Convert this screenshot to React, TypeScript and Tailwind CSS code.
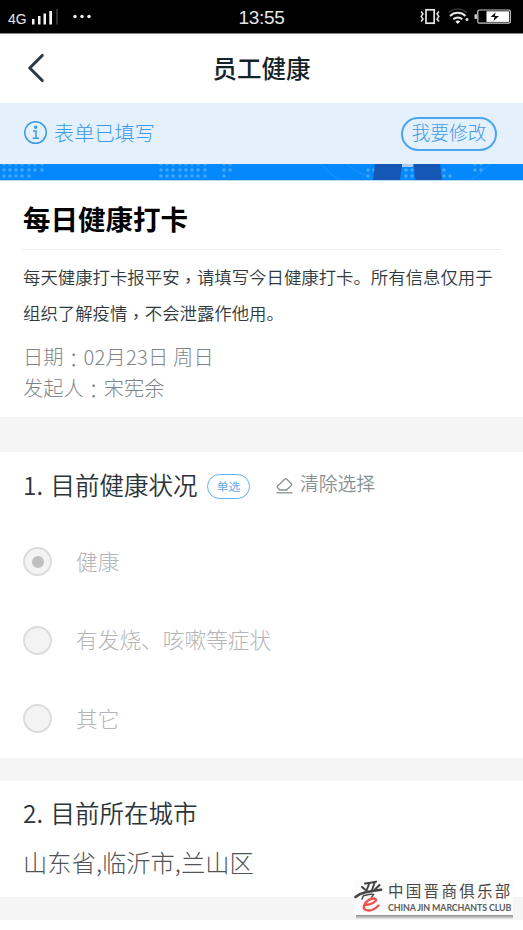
import { ChevronLeft } from "lucide-react"
import clsx from "clsx"

const options = [
  { label: "健康", checked: true },
  { label: "有发烧、咳嗽等症状", checked: false },
  { label: "其它", checked: false },
]

// dot columns of the banner map, one list per row
const bannerDots = [
  { y: 0, xs: [4, 10, 16, 22, 29, 35, 42, 161, 167, 173, 180, 186, 192, 198, 205, 224, 230, 406, 412, 475, 481] },
  { y: 6, xs: [4, 10, 16, 22, 29, 35, 42, 161, 167, 173, 180, 186, 192, 198, 205, 224, 230, 368, 374, 406, 412, 444, 475, 481] },
  { y: 12, xs: [4, 10, 16, 22, 29, 161, 167, 173, 180, 186, 192, 198, 205, 224, 368, 406, 412, 444, 450] },
]

// full-width punctuation centred in its cell
function Mid({ children }: { children: string }) {
  return <span className="relative top-[3px] font-['Noto_Sans_CJK_TC']">{children}</span>
}

function StatusBar() {
  return (
    <div className="flex h-[33px] items-center bg-black text-white">
      <svg className="h-[33px] w-[200px] shrink-0" viewBox="0 0 200 33">
        <text x="8" y="24" fontSize="15.5" fill="#e8e8e8" fontFamily="Liberation Sans, sans-serif" textLength="18.5" lengthAdjust="spacingAndGlyphs">4G</text>
        <g fill="#f2f2f2">
          <rect x="32" y="19" width="2.5" height="5.5" />
          <rect x="38" y="16" width="2.5" height="8.5" />
          <rect x="43.5" y="13.5" width="2.5" height="11" />
          <rect x="49.3" y="11" width="2.7" height="13.5" />
          <rect x="56" y="9" width="1.8" height="15.5" fill="#333" />
          <circle cx="75" cy="16.5" r="1.7" />
          <circle cx="82" cy="16.5" r="1.7" />
          <circle cx="89" cy="16.5" r="1.7" />
        </g>
      </svg>
      <div className="w-[123px] pt-[3px] text-center font-['Liberation_Sans'] text-[19px] tracking-[-0.3px] text-[#e6e6e6]">13:55</div>
      <svg className="h-[33px] w-[200px] shrink-0" viewBox="323 0 200 33">
        <g fill="none" stroke="#e6e6e6" strokeWidth="1.5">
          <rect x="426" y="9.8" width="8.2" height="13.4" strokeWidth="1.7" />
          <path d="M421 11.500l2 2.300-1.800 2.600 1.800 2.700-2 2.400M439 11.500l-2 2.300 1.800 2.600-1.800 2.700 2 2.400" />
          <path d="M448.500 12.500a13 13 0 0 1 18 0" stroke="#333" />
          <path d="M450 16a11 11 0 0 1 15.500 0" strokeWidth="2" />
          <path d="M453.300 19.300a6.500 6.500 0 0 1 9 0" strokeWidth="2" />
          <rect x="477.800" y="10" width="32.500" height="13.200" rx="1.500" stroke="#ccc" strokeWidth="1.200" />
        </g>
        <path d="M455.500 21.500a3 3 0 0 1 4.600 0l-2.300 2.500z" fill="#fff" />
        <circle cx="467" cy="19.500" r="1.500" fill="#ddd" />
        <rect x="474.500" y="14.300" width="2.500" height="4.600" rx="1" fill="#ccc" />
        <rect x="486.500" y="11.300" width="22.500" height="10.600" fill="#fff" />
        <path d="M495.500 12.500l-5 4.500h4l-1 4 5.500-5h-4z" fill="#111" />
      </svg>
    </div>
  )
}

function Banner() {
  return (
    <svg className="block h-[17px] w-full" viewBox="0 0 523 17">
      <rect width="523" height="17" fill="#0588fb" />
      <path d="M321 0q8 9 20 17M346 0q12 9 24 14M490 0q-10 10-20 17" fill="none" stroke="#2494f8" strokeWidth="1" />
      <g fill="#43a8f8">
        {bannerDots.map((row) => row.xs.map((x) => <circle key={`${x}-${row.y}`} cx={x} cy={row.y} r="1.8" />))}
      </g>
      <path d="M375 0h27l-2 16h-27zM414 0h26l2 16h-27z" fill="#1656b5" />
      <rect x="402" y="0" width="11" height="3" fill="#a9cdf2" />
      <rect y="16" width="523" height="1" fill="#b5dafa" />
    </svg>
  )
}

function QuestionTitle({ index, title }: { index: number; title: string }) {
  return (
    <h2 className="flex text-[24.5px] leading-9 font-[350] whitespace-nowrap text-[#2b3438]">
      <span className="w-[27.5px]">{index}.</span>
      {title}
    </h2>
  )
}

function Radio({ checked }: { checked: boolean }) {
  return (
    <span className="flex size-[29px] items-center justify-center rounded-full border-2 border-[#dcdcdc] bg-[#f3f3f3]">
      <span className={clsx("size-3 rounded-full", checked && "bg-[#bfbfbf]")} />
    </span>
  )
}

function ClubMark() {
  return (
    <div className="absolute top-[880px] left-[354px] h-[39px] w-[159px]">
      <div className="flex h-[35px] bg-[#fcfcfc]">
        <svg className="h-[35px] w-[34px] shrink-0" viewBox="0 0 34 35" fill="none" strokeLinecap="round">
          <g stroke="#454545">
            <path d="M11 3.500q6-.5 11-1.800" strokeWidth="2.200" />
            <path d="M15 4l-3 8M20.500 3l-3 8.500" strokeWidth="2" />
            <path d="M8 7l3 2.500M25.500 5l-4.500 4.500" strokeWidth="2.200" />
            <path d="M1.500 17q4-3.500 10-4.700t15.500-2.500" strokeWidth="2.600" />
            <path d="M9.500 15.500l-1.500 3.500M10.500 15.500q7-2 9-1-.5 1.500-2 2.500" strokeWidth="1.500" />
          </g>
          <path d="M11 25q7-.5 10.500-4c2-3-3.500-3.500-7.500-.5s-6 8-2 9.500 9-1 12.500-4.500" stroke="#ef5350" strokeWidth="2.400" />
        </svg>
        <div className="whitespace-nowrap">
          <div className="h-5 text-[15.5px] leading-5 tracking-[2.3px] text-[#484848]">中国晋商俱乐部</div>
          <div className="h-[15px] font-['Lato'] text-[8.9px] leading-[15px] font-bold tracking-[-0.13px] text-[#5c5c5c]">CHINA JIN MARCHANTS CLUB</div>
        </div>
      </div>
      <div className="ml-0.5 h-1 bg-gradient-to-b from-[#8a8a8a] to-[#ededed]" />
    </div>
  )
}

export default function App() {
  return (
    <div className="relative h-[930px] w-[523px] bg-white font-['Noto_Sans_CJK_SC',sans-serif]">
      <StatusBar />
      <header className="grid h-[70px] grid-cols-[80px_1fr_80px] items-center border-t border-[#8a8a8a]">
        <ChevronLeft className="mb-0.5 ml-[11px] size-[50px] text-[#2f3b43]" strokeWidth={1.5} />
        <h1 className="pb-0.5 text-center text-[24.5px] leading-9 font-medium text-[#142329]">员工健康</h1>
      </header>

      <div className="flex h-[61px] items-center justify-between bg-[#e4f0fb] pr-[26px] pl-6 text-[#3c9be9]">
        <div className="flex items-center gap-1.5 pb-0.5">
          <svg className="size-6" viewBox="0 0 24 24" fill="none" stroke="currentColor" strokeWidth="1.500">
            <circle cx="11.500" cy="11.500" r="10.800" />
            <path d="M9 10h3v7M8.700 17.200h6.300" />
            <circle cx="11.700" cy="6.300" r="1" fill="currentColor" />
          </svg>
          <span className="text-[20.2px] leading-8 font-light">表单已填写</span>
        </div>
        <button className="flex h-[34px] w-24 items-center justify-center rounded-full border-2 border-[#4ba5f2] pb-[3px] text-[18.8px] font-light whitespace-nowrap">
          我要修改
        </button>
      </div>

      <Banner />

      <section className="h-[236px] pl-[23px]">
        <h2 className="flex h-[69px] w-[478px] items-center border-b border-[#ebebeb] pt-2 text-[27.5px] font-bold text-black">每日健康打卡</h2>
        <p className="pt-[9px] text-[17.4px] leading-9 font-[350] whitespace-nowrap text-[#303a3e]">
          每天健康打卡报平安<Mid>，</Mid>请填写今日健康打卡。所有信息仅用于
          <br />
          组织了解疫情<Mid>，</Mid>不会泄露作他用。
        </p>
        <div className="pt-[11px] text-[20.2px] leading-[30.5px] font-light whitespace-nowrap text-[#7f8689]">
          <p>日期<Mid>：</Mid><span className="tracking-[0.2px]">02月23日 周日</span></p>
          <p>发起人<Mid>：</Mid>宋宪余</p>
        </div>
      </section>

      <section className="h-[341px] border-t-[35px] border-[#f5f5f5] pl-[23px]">
        <div className="flex items-center pt-[15px]">
          <QuestionTitle index={1} title="目前健康状况" />
          <span className="mt-[2px] ml-[9.5px] flex h-[25px] w-[43px] items-center justify-center rounded-full border-[1.5px] border-[#63b1f4] text-[11.7px] text-[#63acea]">
            单选
          </span>
          <div className="mb-1 ml-[26px] flex items-center gap-[7px] text-[#899093]">
            <svg className="mt-1 size-[17px]" viewBox="0 0 17 17" fill="none" stroke="currentColor" strokeWidth="1.300">
              <path d="M3.800 13l-2.300-2.500q-.6-.8.1-1.500l7.400-6.900q.8-.7 1.600 0l4.800 4.600q.8.8 0 1.600l-4.900 4.700z" />
              <path d="M.5 15.800h16" />
            </svg>
            <span className="text-[18.8px] leading-7 font-[350]">清除选择</span>
          </div>
        </div>
        <div className="flex flex-col gap-[49.500px] pt-11">
          {options.map((option) => (
            <label key={option.label} className="flex h-[29px] items-center gap-6">
              <Radio checked={option.checked} />
              <span className="pb-[3px] text-[21.7px] leading-[29px] font-light text-[#b5b5b5]">{option.label}</span>
            </label>
          ))}
        </div>
      </section>

      <section className="h-[139px] border-t-[23px] border-[#f5f5f5] pt-[14px] pl-[23px]">
        <QuestionTitle index={2} title="目前所在城市" />
        <p className="mt-[13px] text-[24.3px] leading-9 font-light text-[#505456]">山东省,临沂市,兰山区</p>
      </section>
      <div className="h-[23px] bg-[#f5f5f5]" />

      <ClubMark />
    </div>
  )
}
